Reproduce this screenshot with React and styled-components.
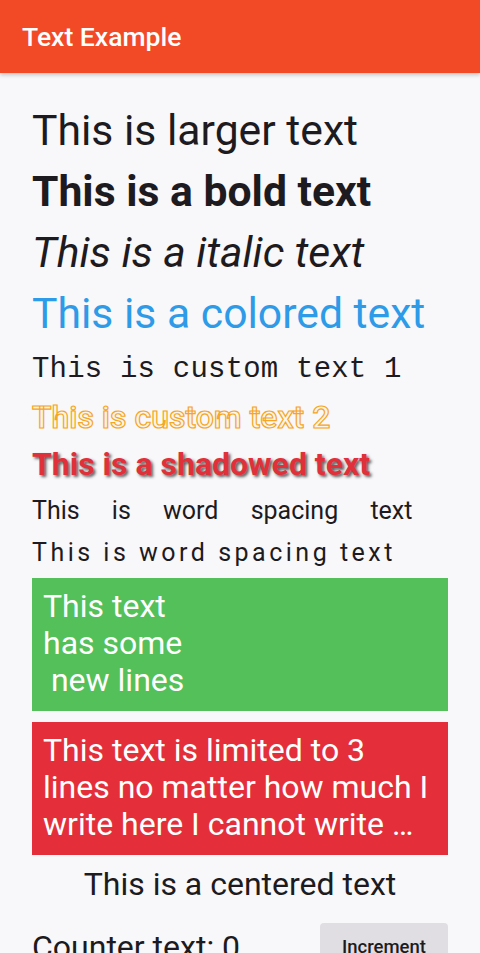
import React, { useState } from 'react';
import styled, { createGlobalStyle } from 'styled-components';

const GlobalStyle = createGlobalStyle`
  html, body {
    margin: 0;
    padding: 0;
    background: #f8f7fa;
    font-family: Roboto, "Liberation Sans", sans-serif;
    color: #1d1b20;
  }
`;

const Page = styled.div`
  width: 480px;
  height: 953px;
  overflow: hidden;
  background: #f8f7fa;
`;

const AppBar = styled.header`
  height: 73px;
  display: flex;
  align-items: center;
  padding: 0 22px;
  background: #f24a27;
  box-shadow: 0 2px 4px rgba(0, 0, 0, 0.22);
  position: relative;
  z-index: 1;
`;

const Title = styled.h1`
  margin: 0;
  font-size: 26.5px;
  line-height: 31px;
  font-weight: 500;
  color: #ffffff;
`;

const Content = styled.main`
  display: flex;
  flex-direction: column;
  padding: 27px 32px 0;
`;

const Line = styled.div`
  font-size: ${p => p.size || 42.7}px;
  line-height: ${p => p.lh || 61}px;
  font-weight: ${p => p.weight || 400};
  font-style: ${p => (p.italic ? 'italic' : 'normal')};
  color: ${p => p.color || '#1d1b20'};
  white-space: nowrap;
`;

const MonoLine = styled(Line)`
  font-family: "Liberation Mono", "DejaVu Sans Mono", monospace;
  letter-spacing: 0.2px;
`;

const OutlineLine = styled(Line)`
  color: #fbf4ea;
  -webkit-text-stroke: 1.2px #f5a623;
`;

const ShadowLine = styled(Line)`
  text-shadow: 2px 2px 3px rgba(40, 40, 40, 0.75);
`;

const SpacedLine = styled(Line)`
  word-spacing: ${p => p.wordGap || 0}px;
  letter-spacing: ${p => p.letterGap || 0}px;
`;

const Box = styled.div`
  margin-top: ${p => p.gap}px;
  padding: 10px 16px 12px 11px;
  background: ${p => p.bg};
  color: #ffffff;
  font-size: 32px;
  line-height: 37px;
  white-space: pre-wrap;
`;

const Clamped = styled.div`
  white-space: normal;
  display: -webkit-box;
  -webkit-box-orient: vertical;
  -webkit-line-clamp: 3;
  overflow: hidden;
`;

const Centered = styled.div`
  text-align: center;
  font-size: 32px;
  line-height: 58px;
`;

const CounterRow = styled.div`
  margin-top: 10px;
  display: flex;
  align-items: center;
  justify-content: space-between;
`;

const CounterText = styled.span`
  font-size: 32px;
  line-height: 37px;
`;

const Button = styled.button`
  width: 128px;
  height: 48px;
  border: none;
  border-radius: 4px;
  background: #e0dee2;
  color: #1d1b20;
  font-family: Roboto, "Liberation Sans", sans-serif;
  font-size: 18.5px;
  font-weight: 500;
  cursor: pointer;
`;

export default function App() {
  const [count, setCount] = useState(0);

  return (
    <Page>
      <GlobalStyle />
      <AppBar>
        <Title>Text Example</Title>
      </AppBar>
      <Content>
        <Line>This is larger text</Line>
        <Line weight={700}>This is a bold text</Line>
        <Line italic>This is a italic text</Line>
        <Line color="#2d9be8">This is a colored text</Line>
        <MonoLine size={29} lh={52}>This is custom text 1</MonoLine>
        <OutlineLine size={32} lh={42} weight={500}>This is custom text 2</OutlineLine>
        <ShadowLine size={32} lh={52} weight={700} color="#e0303a">
          This is a shadowed text
        </ShadowLine>
        <SpacedLine size={25} lh={42} wordGap={26}>This is word spacing text</SpacedLine>
        <SpacedLine size={25} lh={42} letterGap={3.5}>This is word spacing text</SpacedLine>
        <Box bg="#54c05a" gap={4}>{'This text\nhas some\n new lines'}</Box>
        <Box bg="#e42f3a" gap={11}>
          <Clamped>
            {'This text is limited to 3 lines no matter how much I write here I cannot write\u00A0 more than three lines of text'}
          </Clamped>
        </Box>
        <Centered>This is a centered text</Centered>
        <CounterRow>
          <CounterText>Counter text: {count}</CounterText>
          <Button onClick={() => setCount(count + 1)}>Increment</Button>
        </CounterRow>
      </Content>
    </Page>
  );
}
